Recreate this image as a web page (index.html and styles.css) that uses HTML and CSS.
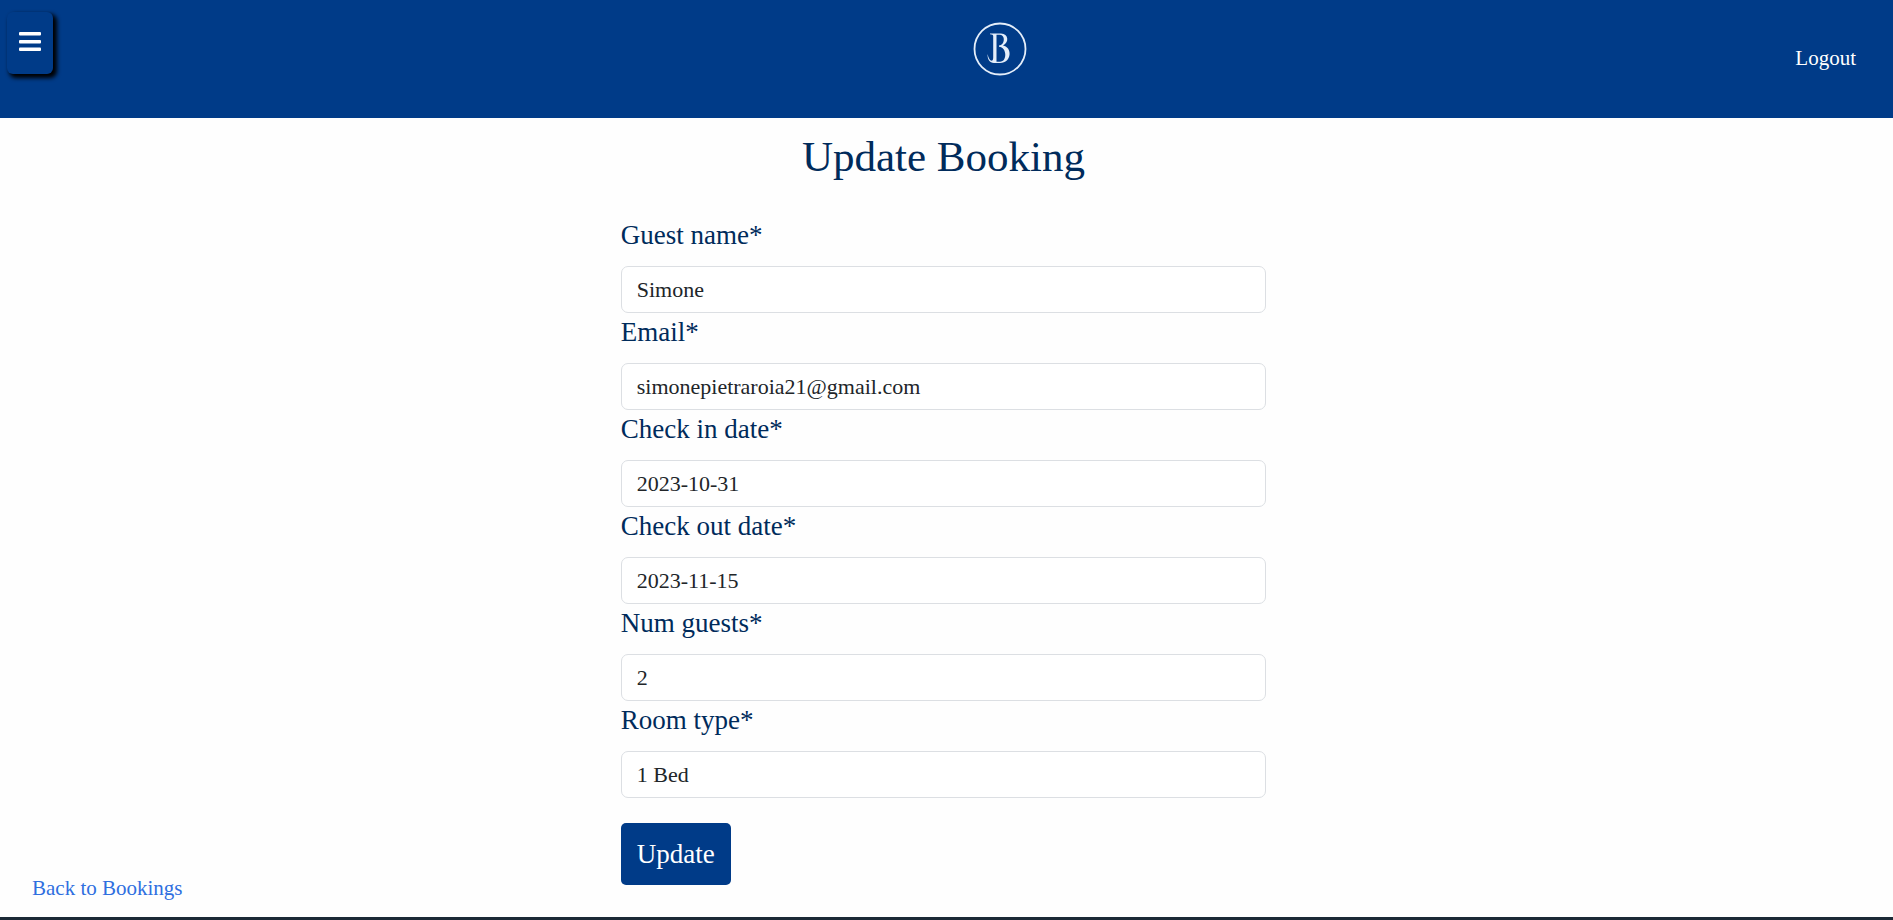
FILE: index.html
```html
<!DOCTYPE html>
<html lang="en">
<head>
  <meta charset="utf-8">
  <meta name="viewport" content="width=device-width, initial-scale=1">
  <title>Update Booking</title>
  <link rel="stylesheet" href="styles.css">
</head>
<body>
  <header class="site-header">
    <button class="menu-toggle" type="button" aria-label="Open menu">
      <svg class="menu-icon" viewBox="0 0 22 20" aria-hidden="true">
        <rect x="0" y="0" width="22" height="3.500" rx="1"/>
        <rect x="0" y="8" width="22" height="3.500" rx="1"/>
        <rect x="0" y="15.500" width="22" height="3.500" rx="1"/>
      </svg>
    </button>
    <a class="brand" href="#" aria-label="Home">
      <svg class="brand-logo" viewBox="0 0 54 54" fill="none" stroke="#e4eefa" aria-hidden="true">
        <circle cx="27" cy="27" r="25.5" stroke-width="1.800"/>
        <g fill="#e4eefa" stroke="none">
          <path fill-rule="evenodd" d="M17 11.500H28c7.500 0 8.500 9 2 12 9.500 1.500 9 17.500-3 17.500H21c-4.500 0-6.500-3.500-6.500-9 1.200 4.500 2.500 6.800 4 6.800 1.200 0 1.700-1.300 1.700-3.300V14c0-1-1-1.500-3.200-1.700zM23.500 12.800V39.700H27c7.500 0 7-14.700-1-15v-1.300c6 0 6.500-10.600 1-10.600z"/>
        </g>
      </svg>
    </a>
    <a class="logout" href="#">Logout</a>
  </header>

  <main class="page">
    <a class="back-link" href="#">Back to Bookings</a>
    <section class="booking">
      <h1 class="title">Update Booking</h1>
      <form class="booking-form">
        <label class="label" for="guest">Guest name*</label>
        <input class="field" id="guest" type="text" value="Simone">
        <label class="label" for="email">Email*</label>
        <input class="field" id="email" type="email" value="simonepietraroia21@gmail.com">
        <label class="label" for="check-in">Check in date*</label>
        <input class="field" id="check-in" type="text" value="2023-10-31">
        <label class="label" for="check-out">Check out date*</label>
        <input class="field" id="check-out" type="text" value="2023-11-15">
        <label class="label" for="guests">Num guests*</label>
        <input class="field" id="guests" type="text" value="2">
        <label class="label" for="room">Room type*</label>
        <select class="field" id="room">
          <option>1 Bed</option>
        </select>
        <button class="submit" type="submit">Update</button>
      </form>
    </section>
  </main>

  <footer class="site-footer"></footer>
</body>
</html>
```

FILE: styles.css
```css
* {
  box-sizing: border-box;
}

body {
  margin: 0;
  min-height: 100vh;
  display: flex;
  flex-direction: column;
  background: #fefefe;
  color: #212529;
  font-family: Georgia, "Liberation Serif", serif;
  font-size: 21px;
  line-height: 30px;
}

.site-header {
  display: grid;
  grid-template-columns: 106px 1fr;
  align-items: start;
  min-height: 118px;
  background: #003b88;
}

.menu-toggle {
  display: flex;
  justify-content: center;
  width: 46px;
  height: 62px;
  margin: 12px 0 0 7px;
  padding: 20px 0 0;
  border: 0;
  border-radius: 6px;
  background: #003b88;
  box-shadow: 3px 3px 4px 1px #000;
}

.menu-icon {
  width: 22px;
  height: 20px;
  fill: #fff;
}

.brand {
  grid-area: 1 / 2;
  justify-self: center;
  margin-top: 22px;
}

.brand-logo {
  display: block;
  width: 54px;
  height: 54px;
}

.logout {
  grid-area: 1 / 2;
  justify-self: end;
  margin: 43px 37px 0 0;
  color: #fff;
  text-decoration: none;
}

.page {
  flex: 1;
  display: grid;
  grid-template-columns: 1fr 1.04fr 1fr;
  padding: 14px 6px 14px 0;
}

.back-link {
  align-self: end;
  justify-self: start;
  margin-left: 32px;
  color: #2f6fe0;
  text-decoration: none;
}

.title {
  margin: 0 0 34px;
  color: #002b5b;
  font-size: 43px;
  font-weight: 400;
  line-height: 50px;
  text-align: center;
}

.booking-form {
  display: flex;
  flex-direction: column;
}

.label {
  padding: 1px 0 13px;
  color: #002b5b;
  font-size: 27px;
  line-height: 36px;
}

.field {
  appearance: none;
  width: 100%;
  height: 47px;
  padding: 0 15px;
  border: 1px solid #dcdfe3;
  border-radius: 7px;
  background: #fff;
  color: #212529;
  font-family: inherit;
  font-size: 22px;
}

.submit {
  align-self: flex-start;
  margin-top: 25px;
  padding: 12px 16px;
  border: 0;
  border-radius: 5px;
  background: #003b88;
  color: #fff;
  font-family: inherit;
  font-size: 27px;
  line-height: 38px;
}

.site-footer {
  height: 3px;
  background: #1c2936;
}
```
